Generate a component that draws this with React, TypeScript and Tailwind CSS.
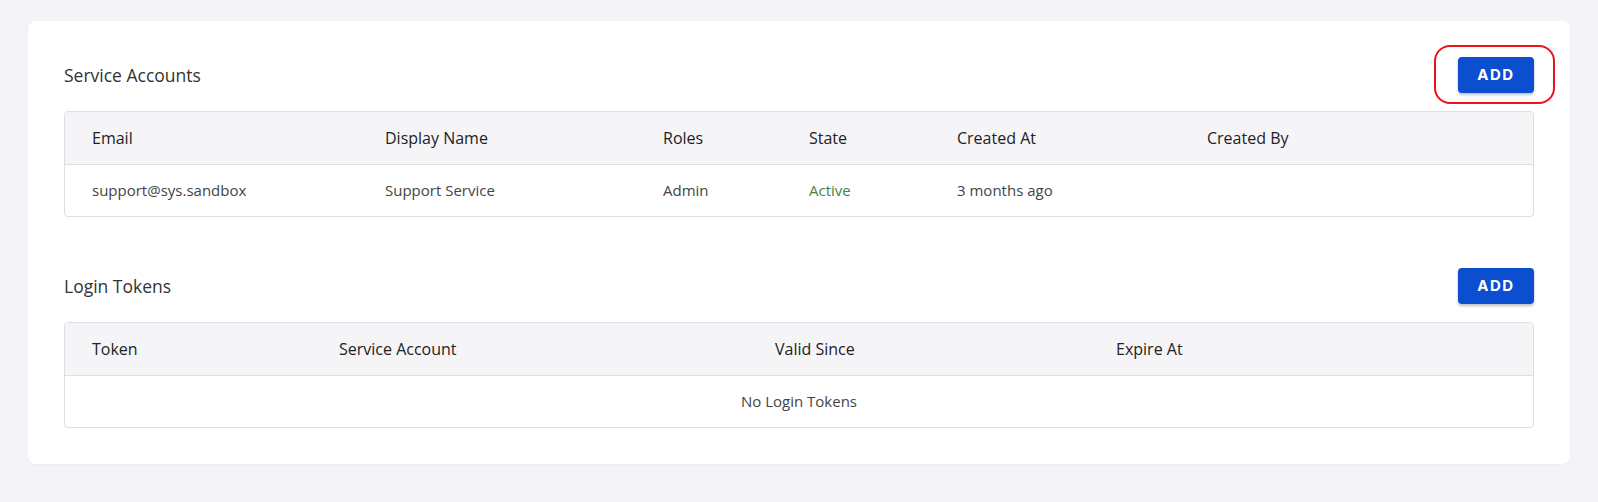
import React from "react";

const font = { fontFamily: '"Open Sans", "Noto Sans", sans-serif' };

function AddButton({ ring }: { ring?: boolean }) {
  return (
    <div className="relative">
      {ring && (
        <div className="pointer-events-none absolute left-[-24px] top-[-12px] h-[59px] w-[121px] rounded-[16px] border-2 border-[#e8141c]" />
      )}
      <button
        className="flex h-[36px] w-[76px] items-center justify-center rounded-[4px] bg-[#0b4ed0] text-[15px] font-bold tracking-[0.1em] text-white shadow-[0_2px_3px_rgba(0,0,0,0.25)]"
        style={{ fontFamily: '"Inter", "Open Sans", sans-serif' }}
      >
        ADD
      </button>
    </div>
  );
}

export default function App() {
  return (
    <div className="min-h-[502px] bg-[#f4f4f8] px-[28px] pt-[21px] pb-[37px]" style={font}>
      <div className="rounded-[8px] bg-white px-[36px] pt-[36px] pb-[36px] shadow-[0_1px_2px_rgba(0,0,0,0.03)]">
        {/* Service Accounts */}
        <div className="flex h-[36px] items-center justify-between">
          <h2 className="text-[17.5px] text-[#333]">Service Accounts</h2>
          <AddButton ring />
        </div>
        <div className="mt-[18px] overflow-hidden rounded-[4px] border border-[#dedee2]">
          <div className="grid h-[53px] grid-cols-[292px_278px_146px_148px_250px_1fr] items-center border-b border-[#dedee2] bg-[#f5f5f8] text-[16px] text-[#222]">
            <div className="pl-[27px]">Email</div>
            <div className="pl-[28px]">Display Name</div>
            <div className="pl-[28px]">Roles</div>
            <div className="pl-[28px]">State</div>
            <div className="pl-[28px]">Created At</div>
            <div className="pl-[28px]">Created By</div>
          </div>
          <div className="grid h-[51px] grid-cols-[292px_278px_146px_148px_250px_1fr] items-center text-[15px] text-[#444]">
            <div className="pl-[27px]">support@sys.sandbox</div>
            <div className="pl-[28px]">Support Service</div>
            <div className="pl-[28px]">Admin</div>
            <div className="pl-[28px] text-[#47804a]">Active</div>
            <div className="pl-[28px]">3 months ago</div>
            <div className="pl-[28px]"></div>
          </div>
        </div>

        {/* Login Tokens */}
        <div className="mt-[51px] flex h-[36px] items-center justify-between">
          <h2 className="text-[17.5px] text-[#333]">Login Tokens</h2>
          <AddButton />
        </div>
        <div className="mt-[18px] overflow-hidden rounded-[4px] border border-[#dedee2]">
          <div className="grid h-[53px] grid-cols-[246px_436px_341px_1fr] items-center border-b border-[#dedee2] bg-[#f5f5f8] text-[16px] text-[#222]">
            <div className="pl-[27px]">Token</div>
            <div className="pl-[28px]">Service Account</div>
            <div className="pl-[28px]">Valid Since</div>
            <div className="pl-[28px]">Expire At</div>
          </div>
          <div className="flex h-[51px] items-center justify-center text-[15px] text-[#444]">
            No Login Tokens
          </div>
        </div>
      </div>
    </div>
  );
}
